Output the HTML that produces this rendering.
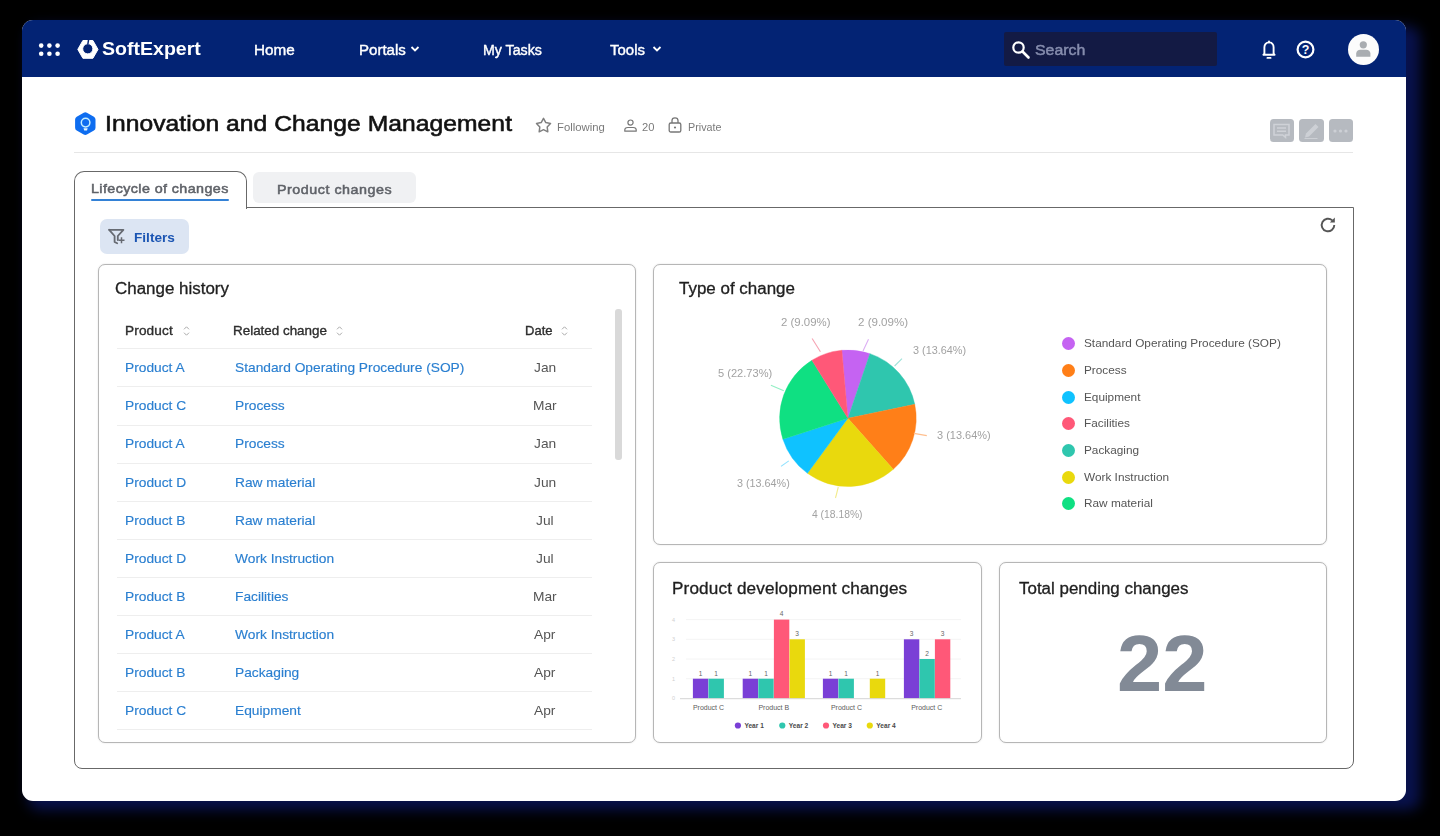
<!DOCTYPE html>
<html lang="en">
<head>
<meta charset="utf-8">
<title>Innovation and Change Management</title>
<style>
*{box-sizing:border-box;margin:0;padding:0}
html,body{width:1440px;height:836px;overflow:hidden;background:#000}
body{font-family:"Liberation Sans",sans-serif;position:relative;color:#222}
.abs{position:absolute}
.t{position:absolute;white-space:nowrap;line-height:1}
.sx{transform-origin:0 50%}
#win{position:absolute;left:22px;top:20px;width:1384px;height:781px;background:#fff;border-radius:11px;overflow:hidden}
#glow{position:absolute;left:28px;top:26px;width:1392px;height:784px;background:#08114c;border-radius:12px;filter:blur(6.500px)}
#nav{position:absolute;left:0;top:0;width:1384px;height:57px;background:#032374}
#search{position:absolute;left:982px;top:12px;width:213px;height:34px;background:#131a44;border-radius:2px}
.card{position:absolute;border:1.300px solid #b6b6b6;border-radius:7px;background:#fff;box-shadow:0 0 2px rgba(0,0,0,.12)}
.rl{position:absolute;left:117px;width:475px;height:1px;background:#eee}
.dot{position:absolute;width:13px;height:13px;border-radius:50%}
</style>
</head>
<body>
<div id="glow"></div>
<div id="win"><div id="nav"><div id="search"></div></div></div>
<svg class="abs" style="left:36px;top:40px" width="28" height="20" viewBox="0 0 28 20"><g fill="#fff"><circle cx="5.2" cy="5.600" r="2.300"/><circle cx="13.400" cy="5.600" r="2.300"/><circle cx="21.600" cy="5.600" r="2.300"/><circle cx="5.200" cy="13.700" r="2.300"/><circle cx="13.400" cy="13.700" r="2.300"/><circle cx="21.600" cy="13.700" r="2.300"/></g></svg>
<svg class="abs" style="left:76px;top:38px" width="24" height="23" viewBox="0 0 24 23"><path fill="#fff" fill-rule="evenodd" stroke="#fff" stroke-width="1" stroke-linejoin="round" d="M6.900 2.500h10l5.100 8.900-5.100 8.900H6.900l-5.100-8.900zM11.800 5.700a5.100 5.100 0 1 0 0 10.200a5.100 5.100 0 1 0 0-10.200z"/><path d="M11.800 6.500L12.600 1.500" stroke="#032374" stroke-width="1.500"/></svg>
<div class="t sx " id="logo" style="left:101.7px;top:39.8px;font-size:18.5px;color:#fff;letter-spacing:0.00px;transform:scaleX(1.057);font-weight:bold;">SoftExpert</div>
<div class="t sx navt" style="left:254.2px;top:42.6px;font-size:14.7px;color:#fff;letter-spacing:-0.00px;transform:scaleX(1.040);-webkit-text-stroke:0.4px #fff;">Home</div>
<div class="t sx navt" style="left:358.7px;top:42.6px;font-size:14.7px;color:#fff;letter-spacing:0.00px;transform:scaleX(1.023);-webkit-text-stroke:0.4px #fff;">Portals</div>
<div class="t sx navt" style="left:483.0px;top:42.6px;font-size:14.7px;color:#fff;letter-spacing:0.00px;transform:scaleX(0.967);-webkit-text-stroke:0.4px #fff;">My Tasks</div>
<div class="t sx navt" style="left:609.5px;top:42.6px;font-size:14.7px;color:#fff;letter-spacing:0.00px;transform:scaleX(1.020);-webkit-text-stroke:0.4px #fff;">Tools</div>
<svg class="abs" style="left:410px;top:45px" width="10" height="8" viewBox="0 0 10 8"><path d="M1.500 2l3.500 3.500L8.500 2" fill="none" stroke="#fff" stroke-width="1.800"/></svg>
<svg class="abs" style="left:651.5px;top:45px" width="10" height="8" viewBox="0 0 10 8"><path d="M1.500 2l3.500 3.500L8.500 2" fill="none" stroke="#fff" stroke-width="1.800"/></svg>
<svg class="abs" style="left:1011px;top:40px" width="20" height="20" viewBox="0 0 20 20"><circle cx="7.500" cy="7.500" r="5.200" fill="none" stroke="#fff" stroke-width="2.200"/><path d="M11.500 11.500l6 6" stroke="#fff" stroke-width="2.600" stroke-linecap="round"/></svg>
<div class="t sx " id="srch" style="left:1035.0px;top:42.1px;font-size:15.5px;color:#868dae;letter-spacing:0.00px;transform:scaleX(1.026);-webkit-text-stroke:0.5px #868dae;">Search</div>
<svg class="abs" style="left:1260px;top:38.800px" width="18" height="23" viewBox="0 0 18 23"><path d="M9 3.400c-2.900 0-4.600 2.100-4.600 4.900v6.200l-1 1.300h11.200l-1-1.300V8.300c0-2.800-1.700-4.900-4.600-4.900z" fill="none" stroke="#fff" stroke-width="1.900" stroke-linejoin="round"/><path d="M9 2.300v1.100" stroke="#fff" stroke-width="1.800" stroke-linecap="round"/><path d="M7.400 18.900h3.200" stroke="#fff" stroke-width="1.800" stroke-linecap="round"/></svg>
<svg class="abs" style="left:1295px;top:39px" width="21" height="21" viewBox="0 0 21 21"><circle cx="10.500" cy="10.500" r="7.900" fill="none" stroke="#fff" stroke-width="2.200"/><text x="10.500" y="14.900" font-family="Liberation Sans,sans-serif" font-size="12.500" font-weight="bold" fill="#fff" text-anchor="middle">?</text></svg>
<svg class="abs" style="left:1348px;top:34px" width="31" height="31" viewBox="0 0 31 31"><circle cx="15.500" cy="15.500" r="15.500" fill="#fcfcfc"/><circle cx="15.300" cy="10.800" r="3.600" fill="#a9adb1"/><path d="M8.200 22.800v-3.300c0-2.300 1.900-3.700 4.200-3.700h5.800c2.300 0 4.200 1.400 4.200 3.700v3.300z" fill="#a9adb1"/></svg>
<svg class="abs" style="left:73px;top:111px" width="25" height="26" viewBox="0 0 25 26"><path fill="#0e6df0" d="M10.700 1.700q1.600-.9 3.200 0l7 4q1.600.9 1.600 2.800v8.200q0 1.900-1.600 2.800l-7 4q-1.600.9-3.200 0l-7-4q-1.600-.9-1.600-2.800V8.500q0-1.900 1.600-2.800z"/><circle cx="12.600" cy="11.600" r="4.300" fill="none" stroke="#c4eeff" stroke-width="1.500"/><path d="M10.500 17.300h4.200l-.7 2.100h-2.800z" fill="#e4f7ff"/></svg>
<div class="t sx " id="title" style="left:105.0px;top:113.1px;font-size:22.6px;color:#111;letter-spacing:0.05px;transform:scaleX(1.090);-webkit-text-stroke:0.6px #111;">Innovation and Change Management</div>
<svg class="abs" style="left:534px;top:116px" width="19" height="19" viewBox="0 0 19 19"><path d="M9.500 2.400l2.300 4.200 4.700.9-3.300 3.500.6 4.800-4.300-2.100-4.300 2.100.6-4.800L2.500 7.500l4.700-.9z" fill="none" stroke="#808080" stroke-width="1.500" stroke-linejoin="round" stroke-linecap="round"/></svg>
<div class="t sx meta" style="left:557.4px;top:121.9px;font-size:10.8px;color:#7a7a7a;letter-spacing:-0.00px;transform:scaleX(1.048);">Following</div>
<svg class="abs" style="left:623px;top:118px" width="15" height="15" viewBox="0 0 15 15"><circle cx="7.500" cy="4.600" r="2.600" fill="none" stroke="#777" stroke-width="1.200"/><path d="M1.800 13.200v-1.400c0-1.300 1.400-2.300 3-2.300h5.400c1.600 0 3 1 3 2.300v1.400z" fill="none" stroke="#777" stroke-width="1.200" stroke-linejoin="round"/></svg>
<div class="t sx meta" style="left:642.4px;top:121.9px;font-size:10.8px;color:#7a7a7a;letter-spacing:0.00px;transform:scaleX(1.032);">20</div>
<svg class="abs" style="left:667px;top:116px" width="16" height="18" viewBox="0 0 16 18"><rect x="2.200" y="7" width="11.600" height="9" rx="1.600" fill="none" stroke="#777" stroke-width="1.300"/><path d="M5 7V4.600c0-1.700 1.300-2.800 3-2.800s3 1.100 3 2.800V7" fill="none" stroke="#777" stroke-width="1.300"/><circle cx="8" cy="11.500" r="1.100" fill="#777"/></svg>
<div class="t sx meta" style="left:687.6px;top:121.9px;font-size:10.8px;color:#7a7a7a;letter-spacing:0.00px;transform:scaleX(0.997);">Private</div>
<div class="abs" style="left:1269.5px;top:119px;width:24.200px;height:23.200px;background:#b6bac0;border-radius:3.500px"></div>
<div class="abs" style="left:1299.4px;top:119px;width:24.200px;height:23.200px;background:#b6bac0;border-radius:3.500px"></div>
<div class="abs" style="left:1328.8px;top:119px;width:24.200px;height:23.200px;background:#b6bac0;border-radius:3.500px"></div>
<svg class="abs" style="left:1269px;top:119px" width="25" height="24" viewBox="0 0 25 24"><path d="M5 5.500h15v10.500h-3.500v2.300l-2.800-2.300H5z" fill="none" stroke="#cfd2d7" stroke-width="1.500"/><path d="M8 9h9M8 12.300h9" stroke="#cfd2d7" stroke-width="1.400"/></svg>
<svg class="abs" style="left:1299px;top:119px" width="25" height="24" viewBox="0 0 25 24"><path d="M6 18.500l1-4L16.500 5l3 3L10 17.500z" fill="#cdd0d5"/><path d="M5.500 19.500h13" stroke="#cdd0d5" stroke-width="1"/></svg>
<svg class="abs" style="left:1328px;top:119px" width="25" height="24" viewBox="0 0 25 24"><g fill="#cdd0d5"><circle cx="7" cy="12" r="1.600"/><circle cx="12.500" cy="12" r="1.600"/><circle cx="18" cy="12" r="1.600"/></g></svg>
<div class="abs" style="left:74px;top:152px;width:1279px;height:1px;background:#e6e6e6"></div>
<div class="abs" style="left:253px;top:171.800px;width:163px;height:31.500px;background:#f0f1f3;border-radius:6px"></div>
<div class="t sx " id="tab2" style="left:277.2px;top:182.5px;font-size:13px;color:#5f6268;letter-spacing:0.47px;transform:scaleX(1.100);-webkit-text-stroke:0.5px #5f6268;">Product changes</div>
<div class="abs" style="left:73.500px;top:206.500px;width:1280px;height:562px;border:1.400px solid #686868;border-radius:0 0 8px 8px"></div>
<div class="abs" style="left:73.500px;top:170.500px;width:173px;height:38px;border:1.400px solid #686868;border-bottom:none;border-radius:10px 10px 0 0;background:#fff"></div>
<div class="t sx " id="tab1" style="left:91.2px;top:182.3px;font-size:13px;color:#5f6268;letter-spacing:0.37px;transform:scaleX(1.100);-webkit-text-stroke:0.5px #5f6268;">Lifecycle of changes</div>
<div class="abs" style="left:91px;top:199.300px;width:138px;height:2px;background:#3381d6;border-radius:1px"></div>
<div class="abs" style="left:100px;top:219px;width:89px;height:34.500px;background:#dce5f3;border-radius:7px"></div>
<svg class="abs" style="left:107px;top:227px" width="20" height="19" viewBox="0 0 20 19"><path d="M2.200 2.800h14.200l-5.600 6.200v4" fill="none" stroke="#666a72" stroke-width="1.800" stroke-linejoin="round" stroke-linecap="round"/><path d="M2.200 2.800l5.400 6.200v6l2.600 1.200" fill="none" stroke="#666a72" stroke-width="1.800" stroke-linejoin="round" stroke-linecap="round"/><path d="M11.500 13.300h6M14.500 10.300v6" stroke="#666a72" stroke-width="1.500"/></svg>
<div class="t sx " id="filt" style="left:133.5px;top:230.8px;font-size:13.2px;color:#1b55b3;letter-spacing:0.00px;transform:scaleX(1.032);font-weight:bold;">Filters</div>
<svg class="abs" style="left:1318px;top:215px" width="20" height="20" viewBox="0 0 20 20"><path d="M16.300 10a6.300 6.300 0 1 1-2-4.600" fill="none" stroke="#555" stroke-width="1.900"/><path d="M16.800 2.500v5h-5z" fill="#555"/></svg>
<div class="card" style="left:98px;top:263.500px;width:538px;height:479px"></div>
<div class="card" style="left:653px;top:264px;width:674px;height:280.500px"></div>
<div class="card" style="left:653px;top:562px;width:329px;height:180.500px"></div>
<div class="card" style="left:999px;top:562px;width:328px;height:180.500px"></div>
<div class="t sx " id="h1" style="left:115.0px;top:280.7px;font-size:15.6px;color:#1f1f1f;letter-spacing:-0.00px;transform:scaleX(1.086);-webkit-text-stroke:0.3px #1f1f1f;">Change history</div>
<div class="t sx " id="h2" style="left:679.0px;top:280.7px;font-size:15.6px;color:#1f1f1f;letter-spacing:0.00px;transform:scaleX(1.087);-webkit-text-stroke:0.3px #1f1f1f;">Type of change</div>
<div class="t sx " id="h3" style="left:671.7px;top:581.1px;font-size:15.6px;color:#1f1f1f;letter-spacing:0.12px;transform:scaleX(1.100);-webkit-text-stroke:0.3px #1f1f1f;">Product development changes</div>
<div class="t sx " id="h4" style="left:1019.2px;top:581.1px;font-size:15.6px;color:#1f1f1f;letter-spacing:0.00px;transform:scaleX(1.086);-webkit-text-stroke:0.3px #1f1f1f;">Total pending changes</div>
<div class="abs" style="left:615px;top:309px;width:7px;height:151px;background:#d9d9d9;border-radius:3px"></div>
<div class="t sx " id="th1" style="left:125.0px;top:324.6px;font-size:12.6px;color:#2e2e2e;letter-spacing:0.14px;transform:scaleX(1.080);-webkit-text-stroke:0.35px #2e2e2e;">Product</div>
<svg class="abs" style="left:182px;top:325px" width="9" height="12" viewBox="0 0 9 12"><path d="M2 4.300L4.500 1.800 7 4.300M2 7.700L4.500 10.200 7 7.700" fill="none" stroke="#aaa" stroke-width="1"/></svg>
<div class="t sx " id="th2" style="left:233.0px;top:324.6px;font-size:12.6px;color:#2e2e2e;letter-spacing:0.00px;transform:scaleX(1.065);-webkit-text-stroke:0.35px #2e2e2e;">Related change</div>
<svg class="abs" style="left:335px;top:325px" width="9" height="12" viewBox="0 0 9 12"><path d="M2 4.300L4.500 1.800 7 4.300M2 7.700L4.500 10.200 7 7.700" fill="none" stroke="#aaa" stroke-width="1"/></svg>
<div class="t sx " id="th3" style="left:524.5px;top:324.6px;font-size:12.6px;color:#2e2e2e;letter-spacing:0.00px;transform:scaleX(1.033);-webkit-text-stroke:0.35px #2e2e2e;">Date</div>
<svg class="abs" style="left:560px;top:325px" width="9" height="12" viewBox="0 0 9 12"><path d="M2 4.300L4.500 1.800 7 4.300M2 7.700L4.500 10.200 7 7.700" fill="none" stroke="#aaa" stroke-width="1"/></svg>
<div class="rl" style="top:348.3px"></div>
<div class="t sx lk" style="left:125.0px;top:361.2px;font-size:13.2px;color:#2a7fd0;letter-spacing:0.00px;transform:scaleX(1.043);-webkit-text-stroke:0.15px #2a7fd0;">Product A</div>
<div class="t sx lk" style="left:234.7px;top:361.2px;font-size:13.2px;color:#2a7fd0;letter-spacing:0.00px;transform:scaleX(1.043);-webkit-text-stroke:0.15px #2a7fd0;">Standard Operating Procedure (SOP)</div>
<div class="t sx dt" style="left:533.9px;top:361.2px;font-size:13.2px;color:#555;letter-spacing:0.00px;transform:scaleX(1.043);">Jan</div>
<div class="rl" style="top:386.4px"></div>
<div class="t sx lk" style="left:125.0px;top:399.3px;font-size:13.2px;color:#2a7fd0;letter-spacing:0.00px;transform:scaleX(1.043);-webkit-text-stroke:0.15px #2a7fd0;">Product C</div>
<div class="t sx lk" style="left:234.7px;top:399.3px;font-size:13.2px;color:#2a7fd0;letter-spacing:0.00px;transform:scaleX(1.043);-webkit-text-stroke:0.15px #2a7fd0;">Process</div>
<div class="t sx dt" style="left:533.1px;top:399.3px;font-size:13.2px;color:#555;letter-spacing:0.00px;transform:scaleX(1.043);">Mar</div>
<div class="rl" style="top:424.5px"></div>
<div class="t sx lk" style="left:125.0px;top:437.4px;font-size:13.2px;color:#2a7fd0;letter-spacing:0.00px;transform:scaleX(1.043);-webkit-text-stroke:0.15px #2a7fd0;">Product A</div>
<div class="t sx lk" style="left:234.7px;top:437.4px;font-size:13.2px;color:#2a7fd0;letter-spacing:0.00px;transform:scaleX(1.043);-webkit-text-stroke:0.15px #2a7fd0;">Process</div>
<div class="t sx dt" style="left:533.9px;top:437.4px;font-size:13.2px;color:#555;letter-spacing:0.00px;transform:scaleX(1.043);">Jan</div>
<div class="rl" style="top:462.6px"></div>
<div class="t sx lk" style="left:125.0px;top:475.5px;font-size:13.2px;color:#2a7fd0;letter-spacing:0.00px;transform:scaleX(1.043);-webkit-text-stroke:0.15px #2a7fd0;">Product D</div>
<div class="t sx lk" style="left:234.7px;top:475.5px;font-size:13.2px;color:#2a7fd0;letter-spacing:0.00px;transform:scaleX(1.043);-webkit-text-stroke:0.15px #2a7fd0;">Raw material</div>
<div class="t sx dt" style="left:533.9px;top:475.5px;font-size:13.2px;color:#555;letter-spacing:0.00px;transform:scaleX(1.043);">Jun</div>
<div class="rl" style="top:500.7px"></div>
<div class="t sx lk" style="left:125.0px;top:513.6px;font-size:13.2px;color:#2a7fd0;letter-spacing:0.00px;transform:scaleX(1.043);-webkit-text-stroke:0.15px #2a7fd0;">Product B</div>
<div class="t sx lk" style="left:234.7px;top:513.6px;font-size:13.2px;color:#2a7fd0;letter-spacing:0.00px;transform:scaleX(1.043);-webkit-text-stroke:0.15px #2a7fd0;">Raw material</div>
<div class="t sx dt" style="left:536.2px;top:513.6px;font-size:13.2px;color:#555;letter-spacing:0.00px;transform:scaleX(1.043);">Jul</div>
<div class="rl" style="top:538.8px"></div>
<div class="t sx lk" style="left:125.0px;top:551.7px;font-size:13.2px;color:#2a7fd0;letter-spacing:0.00px;transform:scaleX(1.043);-webkit-text-stroke:0.15px #2a7fd0;">Product D</div>
<div class="t sx lk" style="left:234.7px;top:551.7px;font-size:13.2px;color:#2a7fd0;letter-spacing:0.00px;transform:scaleX(1.043);-webkit-text-stroke:0.15px #2a7fd0;">Work Instruction</div>
<div class="t sx dt" style="left:536.2px;top:551.7px;font-size:13.2px;color:#555;letter-spacing:0.00px;transform:scaleX(1.043);">Jul</div>
<div class="rl" style="top:576.9px"></div>
<div class="t sx lk" style="left:125.0px;top:589.8px;font-size:13.2px;color:#2a7fd0;letter-spacing:0.00px;transform:scaleX(1.043);-webkit-text-stroke:0.15px #2a7fd0;">Product B</div>
<div class="t sx lk" style="left:234.7px;top:589.8px;font-size:13.2px;color:#2a7fd0;letter-spacing:0.00px;transform:scaleX(1.043);-webkit-text-stroke:0.15px #2a7fd0;">Facilities</div>
<div class="t sx dt" style="left:533.1px;top:589.8px;font-size:13.2px;color:#555;letter-spacing:0.00px;transform:scaleX(1.043);">Mar</div>
<div class="rl" style="top:615.0px"></div>
<div class="t sx lk" style="left:125.0px;top:627.9px;font-size:13.2px;color:#2a7fd0;letter-spacing:0.00px;transform:scaleX(1.043);-webkit-text-stroke:0.15px #2a7fd0;">Product A</div>
<div class="t sx lk" style="left:234.7px;top:627.9px;font-size:13.2px;color:#2a7fd0;letter-spacing:0.00px;transform:scaleX(1.043);-webkit-text-stroke:0.15px #2a7fd0;">Work Instruction</div>
<div class="t sx dt" style="left:534.3px;top:627.9px;font-size:13.2px;color:#555;letter-spacing:0.00px;transform:scaleX(1.043);">Apr</div>
<div class="rl" style="top:653.1px"></div>
<div class="t sx lk" style="left:125.0px;top:666.0px;font-size:13.2px;color:#2a7fd0;letter-spacing:0.00px;transform:scaleX(1.043);-webkit-text-stroke:0.15px #2a7fd0;">Product B</div>
<div class="t sx lk" style="left:234.7px;top:666.0px;font-size:13.2px;color:#2a7fd0;letter-spacing:0.00px;transform:scaleX(1.043);-webkit-text-stroke:0.15px #2a7fd0;">Packaging</div>
<div class="t sx dt" style="left:534.3px;top:666.0px;font-size:13.2px;color:#555;letter-spacing:0.00px;transform:scaleX(1.043);">Apr</div>
<div class="rl" style="top:691.2px"></div>
<div class="t sx lk" style="left:125.0px;top:704.1px;font-size:13.2px;color:#2a7fd0;letter-spacing:0.00px;transform:scaleX(1.043);-webkit-text-stroke:0.15px #2a7fd0;">Product C</div>
<div class="t sx lk" style="left:234.7px;top:704.1px;font-size:13.2px;color:#2a7fd0;letter-spacing:-0.00px;transform:scaleX(1.043);-webkit-text-stroke:0.15px #2a7fd0;">Equipment</div>
<div class="t sx dt" style="left:534.3px;top:704.1px;font-size:13.2px;color:#555;letter-spacing:0.00px;transform:scaleX(1.043);">Apr</div>
<div class="rl" style="top:729.3px"></div>
<svg class="abs" style="left:653px;top:264px" width="674" height="281" viewBox="653 264 674 281" font-family="Liberation Sans,sans-serif">
<path d="M847.9 418.3L841.83 350.27A68.3 68.3 0 0 1 869.91 353.64Z" fill="#c563f2" stroke="#c563f2" stroke-width=".4"/>
<path d="M847.9 418.3L869.91 353.64A68.3 68.3 0 0 1 914.76 404.33Z" fill="#2fc6ae" stroke="#2fc6ae" stroke-width=".4"/>
<path d="M847.9 418.3L914.76 404.33A68.3 68.3 0 0 1 893.25 469.37Z" fill="#ff7f18" stroke="#ff7f18" stroke-width=".4"/>
<path d="M847.9 418.3L893.25 469.37A68.3 68.3 0 0 1 807.47 473.34Z" fill="#e9d90d" stroke="#e9d90d" stroke-width=".4"/>
<path d="M847.9 418.3L807.47 473.34A68.3 68.3 0 0 1 782.87 439.18Z" fill="#0fc2ff" stroke="#0fc2ff" stroke-width=".4"/>
<path d="M847.9 418.3L782.87 439.18A68.3 68.3 0 0 1 811.91 360.25Z" fill="#0fe082" stroke="#0fe082" stroke-width=".4"/>
<path d="M847.9 418.3L811.91 360.25A68.3 68.3 0 0 1 841.83 350.27Z" fill="#ff5878" stroke="#ff5878" stroke-width=".4"/>
<path d="M820.4 351.7L812.1 338.5" stroke="#f6a3b3" stroke-width="1.100" fill="none"/>
<path d="M863 350.9L868.5 339.3" stroke="#dcaef4" stroke-width="1.100" fill="none"/>
<path d="M894.6 366L902 358.6" stroke="#9fe3d9" stroke-width="1.100" fill="none"/>
<path d="M913.9 433.4L926.8 435.6" stroke="#ffbf8e" stroke-width="1.100" fill="none"/>
<path d="M838.3 487L835.5 498" stroke="#f3ec8e" stroke-width="1.100" fill="none"/>
<path d="M788.8 460.9L781 466.4" stroke="#90e2ff" stroke-width="1.100" fill="none"/>
<path d="M783.8 390.8L770.9 385.3" stroke="#93efc4" stroke-width="1.100" fill="none"/>
</svg>
<div class="t sx pl" style="left:780.5px;top:316.8px;font-size:10.8px;color:#a2a2a2;letter-spacing:0.00px;transform:scaleX(1.057);">2 (9.09%)</div>
<div class="t sx pl" style="left:857.5px;top:316.8px;font-size:10.8px;color:#a2a2a2;letter-spacing:0.00px;transform:scaleX(1.070);">2 (9.09%)</div>
<div class="t sx pl" style="left:912.5px;top:344.8px;font-size:10.8px;color:#a2a2a2;letter-spacing:0.00px;transform:scaleX(1.005);">3 (13.64%)</div>
<div class="t sx pl" style="left:937.3px;top:430.1px;font-size:10.8px;color:#a2a2a2;letter-spacing:0.00px;transform:scaleX(1.016);">3 (13.64%)</div>
<div class="t sx pl" style="left:717.5px;top:367.7px;font-size:10.8px;color:#a2a2a2;letter-spacing:-0.00px;transform:scaleX(1.026);">5 (22.73%)</div>
<div class="t sx pl" style="left:736.5px;top:477.7px;font-size:10.8px;color:#a2a2a2;letter-spacing:0.00px;transform:scaleX(0.999);">3 (13.64%)</div>
<div class="t sx pl" style="left:812.0px;top:508.5px;font-size:10.8px;color:#a2a2a2;letter-spacing:0.00px;transform:scaleX(0.956);">4 (18.18%)</div>
<div class="dot" style="left:1061.500px;top:337.1px;background:#c563f2"></div>
<div class="t sx lg" style="left:1084.1px;top:338.1px;font-size:11.2px;color:#555;letter-spacing:0.00px;transform:scaleX(1.055);">Standard Operating Procedure (SOP)</div>
<div class="dot" style="left:1061.500px;top:363.8px;background:#ff7f18"></div>
<div class="t sx lg" style="left:1084.1px;top:364.8px;font-size:11.2px;color:#555;letter-spacing:0.00px;transform:scaleX(1.055);">Process</div>
<div class="dot" style="left:1061.500px;top:390.5px;background:#0fc2ff"></div>
<div class="t sx lg" style="left:1084.1px;top:391.5px;font-size:11.2px;color:#555;letter-spacing:-0.00px;transform:scaleX(1.055);">Equipment</div>
<div class="dot" style="left:1061.500px;top:417.2px;background:#ff5878"></div>
<div class="t sx lg" style="left:1084.1px;top:418.2px;font-size:11.2px;color:#555;letter-spacing:0.00px;transform:scaleX(1.055);">Facilities</div>
<div class="dot" style="left:1061.500px;top:443.9px;background:#2fc6ae"></div>
<div class="t sx lg" style="left:1084.1px;top:444.9px;font-size:11.2px;color:#555;letter-spacing:-0.00px;transform:scaleX(1.055);">Packaging</div>
<div class="dot" style="left:1061.500px;top:470.6px;background:#e9d90d"></div>
<div class="t sx lg" style="left:1084.1px;top:471.6px;font-size:11.2px;color:#555;letter-spacing:0.00px;transform:scaleX(1.055);">Work Instruction</div>
<div class="dot" style="left:1061.500px;top:497.3px;background:#0fe082"></div>
<div class="t sx lg" style="left:1084.1px;top:498.3px;font-size:11.2px;color:#555;letter-spacing:0.00px;transform:scaleX(1.055);">Raw material</div>
<svg class="abs" style="left:653px;top:562px" width="329" height="181" viewBox="653 562 329 181" font-family="Liberation Sans,sans-serif">
<path d="M686 678.7H961" stroke="#f4f4f4" stroke-width="1"/>
<path d="M686 659.0H961" stroke="#f4f4f4" stroke-width="1"/>
<path d="M686 639.3H961" stroke="#f4f4f4" stroke-width="1"/>
<path d="M686 619.6H961" stroke="#f4f4f4" stroke-width="1"/>
<text x="673.500" y="700.4" font-size="5.500" fill="#cfcfcf" text-anchor="middle">0</text>
<text x="673.500" y="680.7" font-size="5.500" fill="#cfcfcf" text-anchor="middle">1</text>
<text x="673.500" y="661.0" font-size="5.500" fill="#cfcfcf" text-anchor="middle">2</text>
<text x="673.500" y="641.3" font-size="5.500" fill="#cfcfcf" text-anchor="middle">3</text>
<text x="673.500" y="621.6" font-size="5.500" fill="#cfcfcf" text-anchor="middle">4</text>
<rect x="692.9" y="678.7" width="15.4" height="19.7" fill="#7a3fd6"/>
<text x="700.6" y="675.5" font-size="6.600" fill="#666" text-anchor="middle">1</text>
<rect x="708.5" y="678.7" width="15.4" height="19.7" fill="#2fc6ae"/>
<text x="716.2" y="675.5" font-size="6.600" fill="#666" text-anchor="middle">1</text>
<rect x="742.7" y="678.7" width="15.4" height="19.7" fill="#7a3fd6"/>
<text x="750.4" y="675.5" font-size="6.600" fill="#666" text-anchor="middle">1</text>
<rect x="758.3" y="678.7" width="15.4" height="19.7" fill="#2fc6ae"/>
<text x="766.0" y="675.5" font-size="6.600" fill="#666" text-anchor="middle">1</text>
<rect x="773.9" y="619.6" width="15.4" height="78.8" fill="#ff5878"/>
<text x="781.6" y="616.4" font-size="6.600" fill="#666" text-anchor="middle">4</text>
<rect x="789.5" y="639.3" width="15.4" height="59.1" fill="#e9d90d"/>
<text x="797.2" y="636.1" font-size="6.600" fill="#666" text-anchor="middle">3</text>
<rect x="822.9" y="678.7" width="15.4" height="19.7" fill="#7a3fd6"/>
<text x="830.6" y="675.5" font-size="6.600" fill="#666" text-anchor="middle">1</text>
<rect x="838.5" y="678.7" width="15.4" height="19.7" fill="#2fc6ae"/>
<text x="846.2" y="675.5" font-size="6.600" fill="#666" text-anchor="middle">1</text>
<rect x="869.8" y="678.7" width="15.4" height="19.7" fill="#e9d90d"/>
<text x="877.5" y="675.5" font-size="6.600" fill="#666" text-anchor="middle">1</text>
<rect x="903.9" y="639.3" width="15.4" height="59.1" fill="#7a3fd6"/>
<text x="911.6" y="636.1" font-size="6.600" fill="#666" text-anchor="middle">3</text>
<rect x="919.4" y="659.0" width="15.4" height="39.4" fill="#2fc6ae"/>
<text x="927.1" y="655.8" font-size="6.600" fill="#666" text-anchor="middle">2</text>
<rect x="934.9" y="639.3" width="15.4" height="59.1" fill="#ff5878"/>
<text x="942.6" y="636.1" font-size="6.600" fill="#666" text-anchor="middle">3</text>
<path d="M680 698.6999999999999H961" stroke="#d4d4d4" stroke-width="1"/>
<text x="708.5" y="710.200" font-size="7" fill="#5c5c5c" text-anchor="middle">Product C</text>
<text x="773.8" y="710.200" font-size="7" fill="#5c5c5c" text-anchor="middle">Product B</text>
<text x="846.5" y="710.200" font-size="7" fill="#5c5c5c" text-anchor="middle">Product C</text>
<text x="926.7" y="710.200" font-size="7" fill="#5c5c5c" text-anchor="middle">Product C</text>
<circle cx="737.9" cy="725.500" r="3.100" fill="#7a3fd6"/><text x="744.4" y="727.900" font-size="6.600" fill="#4a4a4a" font-weight="bold">Year 1</text>
<circle cx="782.3" cy="725.500" r="3.100" fill="#2fc6ae"/><text x="788.8" y="727.900" font-size="6.600" fill="#4a4a4a" font-weight="bold">Year 2</text>
<circle cx="826" cy="725.500" r="3.100" fill="#ff5878"/><text x="832.5" y="727.900" font-size="6.600" fill="#4a4a4a" font-weight="bold">Year 3</text>
<circle cx="869.8" cy="725.500" r="3.100" fill="#e9d90d"/><text x="876.3" y="727.900" font-size="6.600" fill="#4a4a4a" font-weight="bold">Year 4</text>
</svg>
<div class="t sx " id="big" style="left:1117.4px;top:623.5px;font-size:80px;color:#828a96;letter-spacing:0.00px;transform:scaleX(1.016);font-weight:bold;">22</div>
</body>
</html>
